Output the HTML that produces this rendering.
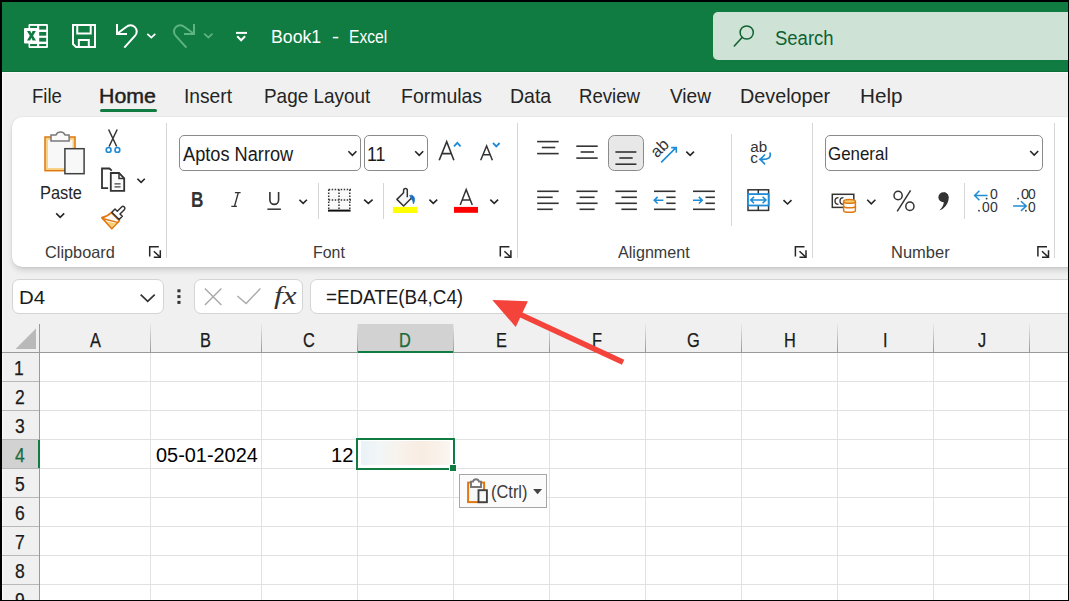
<!DOCTYPE html>
<html><head><meta charset="utf-8"><style>
html,body{margin:0;padding:0;}
body{width:1069px;height:601px;background:#000;position:relative;overflow:hidden;font-family:"Liberation Sans",sans-serif;}
.b{position:absolute;}
.t{position:absolute;white-space:nowrap;line-height:1;transform-origin:0 0;}
</style></head><body>
<div class="b" style="left:2px;top:2px;width:1066px;height:70px;background:#107c41"></div>
<div class="b" style="left:2px;top:72px;width:1066px;height:528px;background:#f0f0f0"></div>
<div class="b" style="left:2px;top:71px;width:1066px;height:1px;background:#0b6e37"></div>
<div class="b" style="left:2px;top:72px;width:1066px;height:1px;background:#fafafa"></div>
<div class="b" style="left:2px;top:72px;width:1px;height:528px;background:#fafafa"></div>
<div class="b" style="left:12px;top:117px;width:1070px;height:150px;background:#fff;border-radius:10px;box-shadow:0 0 1.5px rgba(0,0,0,0.14),0 4px 7px -2px rgba(0,0,0,0.2)"></div>
<div class="b" style="left:713px;top:12px;width:400px;height:48px;background:#cfe2d6;border-radius:5px"></div>
<div class="t" style="left:270.58px;top:28.17px;font-size:18.46px;color:#ffffff;font-weight:normal;transform:scaleX(0.9595);">Book1</div>
<div class="t" style="left:332.15px;top:28.17px;font-size:18.46px;color:#ffffff;font-weight:normal;transform:scaleX(1.1485);">-</div>
<div class="t" style="left:349.15px;top:28.17px;font-size:18.46px;color:#ffffff;font-weight:normal;transform:scaleX(0.8461);">Excel</div>
<div class="t" style="left:774.87px;top:27.57px;font-size:20.35px;color:#0e6232;font-weight:normal;transform:scaleX(0.9090);">Search</div>
<div class="t" style="left:32.01px;top:87.01px;font-size:19.48px;color:#242424;font-weight:normal;transform:scaleX(0.9545);">File</div>
<div class="t" style="left:98.99px;top:87.01px;font-size:19.48px;color:#1f1f1f;font-weight:normal;transform:scaleX(1.0955);-webkit-text-stroke:0.45px #1f1f1f;">Home</div>
<div class="b" style="left:100px;top:109px;width:57px;height:3px;border-radius:2px;background:#107c41"></div>
<div class="t" style="left:183.77px;top:87.01px;font-size:19.48px;color:#242424;font-weight:normal;transform:scaleX(0.9864);">Insert</div>
<div class="t" style="left:264.19px;top:87.01px;font-size:19.48px;color:#242424;font-weight:normal;transform:scaleX(0.9712);">Page Layout</div>
<div class="t" style="left:401.24px;top:87.01px;font-size:19.48px;color:#242424;font-weight:normal;transform:scaleX(0.9990);">Formulas</div>
<div class="t" style="left:509.94px;top:87.01px;font-size:19.48px;color:#242424;font-weight:normal;transform:scaleX(1.0016);">Data</div>
<div class="t" style="left:579.21px;top:87.01px;font-size:19.48px;color:#242424;font-weight:normal;transform:scaleX(0.9563);">Review</div>
<div class="t" style="left:670.40px;top:87.01px;font-size:19.48px;color:#242424;font-weight:normal;transform:scaleX(0.9791);">View</div>
<div class="t" style="left:740.22px;top:87.01px;font-size:19.48px;color:#242424;font-weight:normal;transform:scaleX(1.0165);">Developer</div>
<div class="t" style="left:859.65px;top:87.01px;font-size:19.48px;color:#242424;font-weight:normal;transform:scaleX(1.0614);">Help</div>
<div class="t" style="left:39.69px;top:184.79px;font-size:17.44px;color:#262626;font-weight:normal;transform:scaleX(0.9418);">Paste</div>
<div class="t" style="left:45.18px;top:243.72px;font-size:16.28px;color:#3a3a3a;font-weight:normal;transform:scaleX(1.0017);">Clipboard</div>
<div class="t" style="left:313.33px;top:243.72px;font-size:16.28px;color:#3a3a3a;font-weight:normal;transform:scaleX(0.9790);">Font</div>
<div class="t" style="left:617.50px;top:243.72px;font-size:16.28px;color:#3a3a3a;font-weight:normal;transform:scaleX(0.9909);">Alignment</div>
<div class="t" style="left:890.98px;top:243.72px;font-size:16.28px;color:#3a3a3a;font-weight:normal;transform:scaleX(1.0141);">Number</div>
<div class="b" style="left:166px;top:123px;width:1px;height:135px;background:#d6d6d6"></div>
<div class="b" style="left:517px;top:123px;width:1px;height:135px;background:#d6d6d6"></div>
<div class="b" style="left:812px;top:123px;width:1px;height:135px;background:#d6d6d6"></div>
<div class="b" style="left:1054px;top:123px;width:1px;height:135px;background:#d6d6d6"></div>
<div class="b" style="left:318px;top:183px;width:1px;height:36px;background:#d6d6d6"></div>
<div class="b" style="left:383px;top:183px;width:1px;height:36px;background:#d6d6d6"></div>
<div class="b" style="left:731px;top:134px;width:1px;height:92px;background:#d6d6d6"></div>
<div class="b" style="left:964px;top:183px;width:1px;height:36px;background:#d6d6d6"></div>
<div class="b" style="left:179px;top:135px;width:182px;height:36px;box-sizing:border-box;border:1px solid #8a8a8a;background:#fff;border-radius:5px"></div>
<div class="b" style="left:364px;top:135px;width:64px;height:36px;box-sizing:border-box;border:1px solid #8a8a8a;background:#fff;border-radius:5px"></div>
<div class="b" style="left:825px;top:135px;width:218px;height:36px;box-sizing:border-box;border:1px solid #8a8a8a;background:#fff;border-radius:5px"></div>
<div class="t" style="left:182.70px;top:144.84px;font-size:19.33px;color:#1a1a1a;font-weight:normal;transform:scaleX(0.9415);">Aptos Narrow</div>
<div class="t" style="left:367.06px;top:144.84px;font-size:19.33px;color:#1a1a1a;font-weight:normal;transform:scaleX(0.9215);">11</div>
<div class="t" style="left:827.65px;top:144.65px;font-size:18.60px;color:#1a1a1a;font-weight:normal;transform:scaleX(0.9096);">General</div>
<div class="b" style="left:12px;top:279px;width:152px;height:35px;box-sizing:border-box;border:1px solid #d4d4d4;background:#fff;border-radius:7px"></div>
<div class="b" style="left:194px;top:279px;width:109px;height:35px;box-sizing:border-box;border:1px solid #d4d4d4;background:#fff;border-radius:7px"></div>
<div class="b" style="left:310px;top:279px;width:790px;height:35px;box-sizing:border-box;border:1px solid #d4d4d4;background:#fff;border-radius:7px"></div>
<div class="t" style="left:18.77px;top:289.54px;font-size:17.44px;color:#1a1a1a;font-weight:normal;transform:scaleX(1.1712);">D4</div>
<div class="t" style="left:326.15px;top:288.44px;font-size:19.33px;color:#1a1a1a;font-weight:normal;transform:scaleX(0.9734);">=EDATE(B4,C4)</div>
<div class="b" style="left:40px;top:353px;width:1028px;height:247px;background:#fff"></div>
<div class="b" style="left:358px;top:324px;width:95px;height:28px;background:#d2d2d2"></div>
<div class="b" style="left:2px;top:440px;width:37px;height:28px;background:#d2d2d2"></div>
<div class="b" style="left:40px;top:381px;width:1028px;height:1px;background:#e1e1e1"></div>
<div class="b" style="left:40px;top:410px;width:1028px;height:1px;background:#e1e1e1"></div>
<div class="b" style="left:40px;top:439px;width:1028px;height:1px;background:#e1e1e1"></div>
<div class="b" style="left:40px;top:468px;width:1028px;height:1px;background:#e1e1e1"></div>
<div class="b" style="left:40px;top:497px;width:1028px;height:1px;background:#e1e1e1"></div>
<div class="b" style="left:40px;top:526px;width:1028px;height:1px;background:#e1e1e1"></div>
<div class="b" style="left:40px;top:555px;width:1028px;height:1px;background:#e1e1e1"></div>
<div class="b" style="left:40px;top:584px;width:1028px;height:1px;background:#e1e1e1"></div>
<div class="b" style="left:40px;top:613px;width:1028px;height:1px;background:#e1e1e1"></div>
<div class="b" style="left:150px;top:353px;width:1px;height:247px;background:#e1e1e1"></div>
<div class="b" style="left:261px;top:353px;width:1px;height:247px;background:#e1e1e1"></div>
<div class="b" style="left:357px;top:353px;width:1px;height:247px;background:#e1e1e1"></div>
<div class="b" style="left:453px;top:353px;width:1px;height:247px;background:#e1e1e1"></div>
<div class="b" style="left:549px;top:353px;width:1px;height:247px;background:#e1e1e1"></div>
<div class="b" style="left:645px;top:353px;width:1px;height:247px;background:#e1e1e1"></div>
<div class="b" style="left:741px;top:353px;width:1px;height:247px;background:#e1e1e1"></div>
<div class="b" style="left:837px;top:353px;width:1px;height:247px;background:#e1e1e1"></div>
<div class="b" style="left:933px;top:353px;width:1px;height:247px;background:#e1e1e1"></div>
<div class="b" style="left:1029px;top:353px;width:1px;height:247px;background:#e1e1e1"></div>
<div class="b" style="left:1125px;top:353px;width:1px;height:247px;background:#e1e1e1"></div>
<div class="b" style="left:150px;top:324px;width:1px;height:28px;background:linear-gradient(#e8e8e8,#9a9a9a)"></div>
<div class="b" style="left:261px;top:324px;width:1px;height:28px;background:linear-gradient(#e8e8e8,#9a9a9a)"></div>
<div class="b" style="left:357px;top:324px;width:1px;height:28px;background:linear-gradient(#e8e8e8,#9a9a9a)"></div>
<div class="b" style="left:453px;top:324px;width:1px;height:28px;background:linear-gradient(#e8e8e8,#9a9a9a)"></div>
<div class="b" style="left:549px;top:324px;width:1px;height:28px;background:linear-gradient(#e8e8e8,#9a9a9a)"></div>
<div class="b" style="left:645px;top:324px;width:1px;height:28px;background:linear-gradient(#e8e8e8,#9a9a9a)"></div>
<div class="b" style="left:741px;top:324px;width:1px;height:28px;background:linear-gradient(#e8e8e8,#9a9a9a)"></div>
<div class="b" style="left:837px;top:324px;width:1px;height:28px;background:linear-gradient(#e8e8e8,#9a9a9a)"></div>
<div class="b" style="left:933px;top:324px;width:1px;height:28px;background:linear-gradient(#e8e8e8,#9a9a9a)"></div>
<div class="b" style="left:1029px;top:324px;width:1px;height:28px;background:linear-gradient(#e8e8e8,#9a9a9a)"></div>
<div class="b" style="left:1125px;top:324px;width:1px;height:28px;background:linear-gradient(#e8e8e8,#9a9a9a)"></div>
<div class="b" style="left:2px;top:381px;width:37px;height:1px;background:#b8b8b8"></div>
<div class="b" style="left:2px;top:410px;width:37px;height:1px;background:#b8b8b8"></div>
<div class="b" style="left:2px;top:439px;width:37px;height:1px;background:#b8b8b8"></div>
<div class="b" style="left:2px;top:468px;width:37px;height:1px;background:#b8b8b8"></div>
<div class="b" style="left:2px;top:497px;width:37px;height:1px;background:#b8b8b8"></div>
<div class="b" style="left:2px;top:526px;width:37px;height:1px;background:#b8b8b8"></div>
<div class="b" style="left:2px;top:555px;width:37px;height:1px;background:#b8b8b8"></div>
<div class="b" style="left:2px;top:584px;width:37px;height:1px;background:#b8b8b8"></div>
<div class="b" style="left:2px;top:613px;width:37px;height:1px;background:#b8b8b8"></div>
<div class="b" style="left:39px;top:324px;width:1px;height:276px;background:#9a9a9a"></div>
<div class="b" style="left:2px;top:352px;width:1066px;height:1px;background:#9a9a9a"></div>
<div class="b" style="left:358px;top:351px;width:95px;height:2px;background:#107c41"></div>
<div class="b" style="left:38px;top:440px;width:2px;height:28px;background:#107c41"></div>
<svg class="b" style="left:0;top:0" width="1069" height="601"><polygon points="36,328.5 36,349 15.5,349" fill="#b9b9b9"/></svg>
<div class="t" style="left:89.56px;top:331.31px;font-size:19.48px;color:#1a1a1a;font-weight:normal;transform:scaleX(0.8400);-webkit-text-stroke:0.25px #1a1a1a;">A</div>
<div class="t" style="left:200.31px;top:331.31px;font-size:19.48px;color:#1a1a1a;font-weight:normal;transform:scaleX(0.8400);-webkit-text-stroke:0.25px #1a1a1a;">B</div>
<div class="t" style="left:303.49px;top:331.31px;font-size:19.48px;color:#1a1a1a;font-weight:normal;transform:scaleX(0.8400);-webkit-text-stroke:0.25px #1a1a1a;">C</div>
<div class="t" style="left:399.32px;top:331.31px;font-size:19.48px;color:#1b6a3c;font-weight:normal;transform:scaleX(0.8400);-webkit-text-stroke:0.25px #1b6a3c;">D</div>
<div class="t" style="left:495.73px;top:331.31px;font-size:19.48px;color:#1a1a1a;font-weight:normal;transform:scaleX(0.8400);-webkit-text-stroke:0.25px #1a1a1a;">E</div>
<div class="t" style="left:592.14px;top:331.31px;font-size:19.48px;color:#1a1a1a;font-weight:normal;transform:scaleX(0.8400);-webkit-text-stroke:0.25px #1a1a1a;">F</div>
<div class="t" style="left:687.32px;top:331.31px;font-size:19.48px;color:#1a1a1a;font-weight:normal;transform:scaleX(0.8400);-webkit-text-stroke:0.25px #1a1a1a;">G</div>
<div class="t" style="left:783.57px;top:331.31px;font-size:19.48px;color:#1a1a1a;font-weight:normal;transform:scaleX(0.8400);-webkit-text-stroke:0.25px #1a1a1a;">H</div>
<div class="t" style="left:883.21px;top:331.31px;font-size:19.48px;color:#1a1a1a;font-weight:normal;transform:scaleX(0.8400);-webkit-text-stroke:0.25px #1a1a1a;">I</div>
<div class="t" style="left:977.86px;top:331.31px;font-size:19.48px;color:#1a1a1a;font-weight:normal;transform:scaleX(0.8400);-webkit-text-stroke:0.25px #1a1a1a;">J</div>
<div class="t" style="left:14.47px;top:359.31px;font-size:19.48px;color:#1a1a1a;font-weight:normal;transform:scaleX(0.9000);-webkit-text-stroke:0.25px #1a1a1a;">1</div>
<div class="t" style="left:14.69px;top:388.31px;font-size:19.48px;color:#1a1a1a;font-weight:normal;transform:scaleX(0.9000);-webkit-text-stroke:0.25px #1a1a1a;">2</div>
<div class="t" style="left:14.78px;top:417.31px;font-size:19.48px;color:#1a1a1a;font-weight:normal;transform:scaleX(0.9000);-webkit-text-stroke:0.25px #1a1a1a;">3</div>
<div class="t" style="left:14.78px;top:446.31px;font-size:19.48px;color:#1b6a3c;font-weight:normal;transform:scaleX(0.9000);-webkit-text-stroke:0.25px #1b6a3c;">4</div>
<div class="t" style="left:14.74px;top:475.31px;font-size:19.48px;color:#1a1a1a;font-weight:normal;transform:scaleX(0.9000);-webkit-text-stroke:0.25px #1a1a1a;">5</div>
<div class="t" style="left:14.65px;top:504.31px;font-size:19.48px;color:#1a1a1a;font-weight:normal;transform:scaleX(0.9000);-webkit-text-stroke:0.25px #1a1a1a;">6</div>
<div class="t" style="left:14.69px;top:533.31px;font-size:19.48px;color:#1a1a1a;font-weight:normal;transform:scaleX(0.9000);-webkit-text-stroke:0.25px #1a1a1a;">7</div>
<div class="t" style="left:14.74px;top:562.31px;font-size:19.48px;color:#1a1a1a;font-weight:normal;transform:scaleX(0.9000);-webkit-text-stroke:0.25px #1a1a1a;">8</div>
<div class="t" style="left:14.74px;top:591.31px;font-size:19.48px;color:#1a1a1a;font-weight:normal;transform:scaleX(0.9000);-webkit-text-stroke:0.25px #1a1a1a;">9</div>
<div class="t" style="left:155.80px;top:445.47px;font-size:20.35px;color:#000;font-weight:normal;transform:scaleX(0.9780);">05-01-2024</div>
<div class="t" style="left:331.48px;top:445.47px;font-size:20.35px;color:#000;font-weight:normal;transform:scaleX(0.9928);">12</div>
<div class="b" style="left:356px;top:438px;width:99px;height:32px;box-sizing:border-box;border:2px solid #107c41"></div>
<div class="b" style="left:361px;top:441px;width:89px;height:24px;background:linear-gradient(90deg,#eaf2f8 0%,#f2f6f6 22%,#f7f3ed 40%,#f8eee5 58%,#f8ede2 70%,#f9f1e8 85%,#faf6f1 100%)"></div>
<div class="b" style="left:449px;top:464px;width:8px;height:8px;background:#fff"></div>
<div class="b" style="left:450px;top:465px;width:6px;height:6px;background:#107c41"></div>
<div class="b" style="left:459px;top:474px;width:88px;height:34px;box-sizing:border-box;border:1px solid #a6a6a6;background:#fbfbfb;border-radius:0px"></div>
<div class="t" style="left:491.21px;top:482.48px;font-size:19.04px;color:#3c3c3c;font-weight:normal;transform:scaleX(0.8633);">(Ctrl)</div>
<div class="t" style="left:191.08px;top:189.34px;font-size:21.80px;color:#333;font-weight:bold;transform:scaleX(0.7905);">B</div>
<div class="t" style="left:989.51px;top:187.43px;font-size:14.97px;color:#333;font-weight:normal;transform:scaleX(0.9365);">0</div>
<div class="t" style="left:982.12px;top:199.53px;font-size:14.97px;color:#333;font-weight:normal;transform:scaleX(0.9228);">0</div>
<div class="t" style="left:989.51px;top:199.53px;font-size:14.97px;color:#333;font-weight:normal;transform:scaleX(0.9365);">0</div>
<div class="t" style="left:1020.79px;top:187.43px;font-size:14.97px;color:#333;font-weight:normal;transform:scaleX(0.9778);">0</div>
<div class="t" style="left:1028.32px;top:187.43px;font-size:14.97px;color:#333;font-weight:normal;transform:scaleX(0.9228);">0</div>
<div class="t" style="left:1028.32px;top:199.53px;font-size:14.97px;color:#333;font-weight:normal;transform:scaleX(0.9228);">0</div>
<svg class="b" style="left:0;top:0" width="1069" height="601"><rect x="28.5" y="24" width="19.5" height="24" rx="1.2" fill="#fff"/><rect x="30.1" y="25.9" width="6.9" height="2.1000000000000014" fill="#107c41"/><rect x="30.1" y="31.4" width="6.9" height="4.300000000000004" fill="#107c41"/><rect x="30.1" y="37.6" width="6.9" height="4.0" fill="#107c41"/><rect x="30.1" y="44" width="6.9" height="2.1000000000000014" fill="#107c41"/><rect x="39.2" y="25.9" width="7" height="3.700000000000003" fill="#107c41"/><rect x="39.2" y="32" width="7" height="3.700000000000003" fill="#107c41"/><rect x="39.2" y="37.8" width="7" height="3.8000000000000043" fill="#107c41"/><rect x="39.2" y="44" width="7" height="2.1000000000000014" fill="#107c41"/><rect x="24" y="28" width="14.2" height="15.4" rx="1" fill="#fff"/><polygon points="27,31 30.3,31 31.4,33.6 32.6,31 35.8,31 33.1,35.7 36,40.5 32.6,40.5 31.4,37.8 30.2,40.5 27,40.5 29.8,35.7" fill="#107c41"/><path d="M73,25 H95 V47 H76 L73,44 Z" fill="none" stroke="#fff" stroke-width="2"/><path d="M77.25,25 V33.4 H90.7 V25" fill="none" stroke="#fff" stroke-width="2"/><path d="M78.85,47 V39.9 H88.8 V47" fill="none" stroke="#fff" stroke-width="2"/><path d="M117,24 V34 H127" fill="none" stroke="#fff" stroke-width="2"/><path d="M117.5,33.5 L126.1,27.1 A6.2,6.2 0 1 1 134.9,35.9 L124.3,47.6" fill="none" stroke="#fff" stroke-width="2"/><path d="M147.3,33.8 L151.3,37.6 L155.3,33.8" fill="none" stroke="#fff" stroke-width="1.7" stroke-linecap="butt" stroke-linejoin="miter"/><path d="M194,24 V34 H184" fill="none" stroke="#5db381" stroke-width="2"/><path d="M193.5,33.5 L184.6,27.1 A6.2,6.2 0 1 0 175.8,35.9 L186.4,47.6" fill="none" stroke="#5db381" stroke-width="2"/><path d="M204.2,33.7 L208.35,37.5 L212.5,33.7" fill="none" stroke="#5db381" stroke-width="1.7" stroke-linecap="butt" stroke-linejoin="miter"/><path d="M236,32.9 H247" stroke="#fff" stroke-width="2"/><path d="M237.2,36.3 L241.14999999999998,40.3 L245.1,36.3" fill="none" stroke="#fff" stroke-width="2" stroke-linecap="butt" stroke-linejoin="miter"/><circle cx="746.7" cy="32.5" r="6.6" fill="none" stroke="#0e6232" stroke-width="1.5"/><path d="M742.3,37.3 L734.3,46" stroke="#0e6232" stroke-width="1.6" stroke-linecap="round"/><rect x="45" y="137" width="30" height="33.7" fill="#f7d289" stroke="#e0780f" stroke-width="1.5"/><rect x="48" y="140" width="24.5" height="28" fill="#f8f8f8"/><path d="M51,134.9 H56 A5,5 0 0 1 65,134.9 H69.1 V141 H51 Z" fill="#fafafa" stroke="#7a7a7a" stroke-width="1.5"/><rect x="64.9" y="148.7" width="19.2" height="25" fill="#f8f8f8" stroke="#404040" stroke-width="1.5"/><path d="M56.2,213.4 L60.2,217.4 L64.2,213.4" fill="none" stroke="#262626" stroke-width="1.6" stroke-linecap="butt" stroke-linejoin="miter"/><path d="M108.6,129.5 L116.7,146.5 M117.2,129.5 L109.1,146.5" stroke="#333" stroke-width="1.5" fill="none"/><circle cx="108.6" cy="149.9" r="2.4" fill="none" stroke="#1e8bd6" stroke-width="1.6"/><circle cx="117.4" cy="149.9" r="2.4" fill="none" stroke="#1e8bd6" stroke-width="1.6"/><path d="M108.1,188.2 H102 V168.5 H109.4 L111.8,170.6" fill="none" stroke="#333" stroke-width="1.8"/><path d="M110.8,173 H119 L124.2,178.4 V190.9 H110.8 Z" fill="#fafafa" stroke="#333" stroke-width="1.8"/><path d="M119,173 V178.4 H124.2" fill="none" stroke="#333" stroke-width="1.5"/><path d="M114.5,183.8 H120.6 M114.5,186.9 H120.6" stroke="#444" stroke-width="1.3"/><path d="M137.4,178.7 L141.10000000000002,182.4 L144.8,178.7" fill="none" stroke="#262626" stroke-width="1.6" stroke-linecap="butt" stroke-linejoin="miter"/><path d="M101.8,217.6 Q107.5,216.5 111.3,212.6 L119.4,220.8 L111.8,228.6 Z" fill="#fafafa" stroke="#e0780f" stroke-width="1.6" stroke-linejoin="round"/><path d="M106.5,221.6 L116.2,223.5 L111.8,227.5 Z" fill="#f5cf72"/><path d="M102.5,218.5 L118.5,222.6" stroke="#e0780f" stroke-width="1.4"/><path d="M111.8,212.2 L115,209 L117.3,211.3 L121.6,207 A1.9,1.9 0 0 1 124.3,209.7 L120,214 L122.3,216.3 L119.1,219.5 Z" fill="#fff" stroke="#333" stroke-width="1.5" stroke-linejoin="round"/><path d="M149.7,256.5 V246.8 H158.79999999999998" fill="none" stroke="#262626" stroke-width="1.5"/><path d="M153.79999999999998,251.20000000000002 L160.1,257.1" stroke="#262626" stroke-width="1.5" fill="none"/><path d="M160.29999999999998,250.3 V257.2 H153.79999999999998" fill="none" stroke="#262626" stroke-width="1.5"/><path d="M500.3,256.5 V246.8 H509.40000000000003" fill="none" stroke="#262626" stroke-width="1.5"/><path d="M504.40000000000003,251.20000000000002 L510.7,257.1" stroke="#262626" stroke-width="1.5" fill="none"/><path d="M510.90000000000003,250.3 V257.2 H504.40000000000003" fill="none" stroke="#262626" stroke-width="1.5"/><path d="M795.4,256.5 V246.8 H804.5" fill="none" stroke="#262626" stroke-width="1.5"/><path d="M799.5,251.20000000000002 L805.8,257.1" stroke="#262626" stroke-width="1.5" fill="none"/><path d="M806.0,250.3 V257.2 H799.5" fill="none" stroke="#262626" stroke-width="1.5"/><path d="M1037.9,256.5 V246.8 H1047.0" fill="none" stroke="#262626" stroke-width="1.5"/><path d="M1042.0,251.20000000000002 L1048.3000000000002,257.1" stroke="#262626" stroke-width="1.5" fill="none"/><path d="M1048.5,250.3 V257.2 H1042.0" fill="none" stroke="#262626" stroke-width="1.5"/><path d="M348.4,151.3 L352.4,155.4 L356.4,151.3" fill="none" stroke="#262626" stroke-width="1.6" stroke-linecap="butt" stroke-linejoin="miter"/><path d="M415.2,151.3 L419.2,155.4 L423.2,151.3" fill="none" stroke="#262626" stroke-width="1.6" stroke-linecap="butt" stroke-linejoin="miter"/><path d="M439.2,160.2 L446.7,141.6 L453.9,160.2 M442.2,153.6 H451.2" fill="none" stroke="#333" stroke-width="1.6"/><path d="M454,146.4 L457.3,142.8 L460.6,146.4" fill="none" stroke="#1e8bd6" stroke-width="1.8" stroke-linecap="butt" stroke-linejoin="miter"/><path d="M480.7,160.2 L486.6,146 L492.4,160.2 M482.9,154.7 H490.3" fill="none" stroke="#333" stroke-width="1.5"/><path d="M493,143 L496.3,146.4 L499.6,143" fill="none" stroke="#1e8bd6" stroke-width="1.8" stroke-linecap="butt" stroke-linejoin="miter"/><path d="M234.9,192.6 H240.6 M231.3,206.4 H236.9 M238.3,192.6 L234.5,206.4" fill="none" stroke="#333" stroke-width="1.4"/><path d="M269.9,192.1 V200 A4.35,4.35 0 0 0 278.6,200 V192.1" fill="none" stroke="#333" stroke-width="1.6"/><path d="M267.4,209.2 H280.9" stroke="#333" stroke-width="1.5"/><path d="M299.4,199.7 L303.15,203.4 L306.9,199.7" fill="none" stroke="#262626" stroke-width="1.6" stroke-linecap="butt" stroke-linejoin="miter"/><rect x="329" y="190" width="21" height="20" fill="#f9f9f9"/><path d="M328.7,189.6 H351 M328.7,189.6 V209 M349.8,189.6 V209 M339,189.6 V209 M328.7,200 H351" fill="none" stroke="#333" stroke-width="1.5" stroke-dasharray="1.5 1.5"/><path d="M328,210.6 H350.6" stroke="#111" stroke-width="2"/><path d="M364.1,199.7 L368.35,203.4 L372.6,199.7" fill="none" stroke="#262626" stroke-width="1.6" stroke-linecap="butt" stroke-linejoin="miter"/><path d="M396.9,199.4 L403.6,192.7 L411.3,197.8 L403.6,205.6 Z" fill="#f7f7f7"/><path d="M403.6,192.7 L396.9,199.4 L403.6,206 L411.3,198.3" fill="none" stroke="#333" stroke-width="1.5" stroke-linejoin="round"/><path d="M403.6,193 V190.3 A1.85,1.85 0 0 1 407.3,190.3 V197.3" fill="none" stroke="#333" stroke-width="1.5"/><path d="M409.6,195.4 Q413.5,194.2 414.6,198.5 Q415,201.5 413.4,204 Q413,200.5 411.3,198.8 Z" fill="#1a6fc2" stroke="#1a6fc2" stroke-width="0.6"/><rect x="392.9" y="206.9" width="24.1" height="6.1" fill="#ffff00"/><path d="M429.4,199.7 L433.29999999999995,203.4 L437.2,199.7" fill="none" stroke="#262626" stroke-width="1.6" stroke-linecap="butt" stroke-linejoin="miter"/><path d="M460.2,205 L466.2,189.6 L472.3,205 M462.4,200 H470.1" fill="none" stroke="#333" stroke-width="1.5"/><rect x="454" y="206.9" width="24" height="5.9" fill="#ff0000"/><path d="M490.3,199.7 L494.20000000000005,203.4 L498.1,199.7" fill="none" stroke="#262626" stroke-width="1.6" stroke-linecap="butt" stroke-linejoin="miter"/><path d="M537.1,141.6 H558.7" stroke="#333" stroke-width="1.6"/><path d="M541.8,147.5 H555.3" stroke="#333" stroke-width="1.6"/><path d="M537.1,153.6 H558.7" stroke="#333" stroke-width="1.6"/><path d="M576.3,146.2 H597.7" stroke="#333" stroke-width="1.6"/><path d="M580.6,152 H594" stroke="#333" stroke-width="1.6"/><path d="M576.3,158.1 H597.7" stroke="#333" stroke-width="1.6"/><rect x="608.5" y="135.5" width="35" height="35" rx="6" fill="#e8e8e8" stroke="#8a8a8a" stroke-width="1"/><path d="M615.4,152 H636.4" stroke="#333" stroke-width="1.6"/><path d="M619.3,158 H632.7" stroke="#333" stroke-width="1.6"/><path d="M615.4,164.2 H636.4" stroke="#333" stroke-width="1.6"/><path d="M537.2,191.3 H558.7" stroke="#333" stroke-width="1.6"/><path d="M537.2,197.3 H552.7" stroke="#333" stroke-width="1.6"/><path d="M537.2,203.3 H558.7" stroke="#333" stroke-width="1.6"/><path d="M537.2,209.3 H552.7" stroke="#333" stroke-width="1.6"/><path d="M576.4,191.3 H597.6" stroke="#333" stroke-width="1.6"/><path d="M579.6,197.3 H594.6" stroke="#333" stroke-width="1.6"/><path d="M576.4,203.3 H597.6" stroke="#333" stroke-width="1.6"/><path d="M579.6,209.3 H594.6" stroke="#333" stroke-width="1.6"/><path d="M615.4,191.3 H636.9" stroke="#333" stroke-width="1.6"/><path d="M621.4,197.3 H636.9" stroke="#333" stroke-width="1.6"/><path d="M615.4,203.3 H636.9" stroke="#333" stroke-width="1.6"/><path d="M621.4,209.3 H636.9" stroke="#333" stroke-width="1.6"/><path d="M654,191.3 H675.6" stroke="#333" stroke-width="1.6"/><path d="M666.3,197.3 H675.6" stroke="#333" stroke-width="1.6"/><path d="M666.3,203.3 H675.6" stroke="#333" stroke-width="1.6"/><path d="M654,209.3 H675.6" stroke="#333" stroke-width="1.6"/><path d="M654.3,200.2 H663.4 M657.6,196.9 L654.3,200.2 L657.6,203.5" fill="none" stroke="#1e8bd6" stroke-width="1.6"/><path d="M693,191.3 H714.9" stroke="#333" stroke-width="1.6"/><path d="M705.5,197.3 H714.9" stroke="#333" stroke-width="1.6"/><path d="M705.5,203.3 H714.9" stroke="#333" stroke-width="1.6"/><path d="M693,209.3 H714.9" stroke="#333" stroke-width="1.6"/><path d="M693,200.2 H702.2 M698.9,196.9 L702.2,200.2 L698.9,203.5" fill="none" stroke="#1e8bd6" stroke-width="1.6"/><text x="0" y="0" transform="translate(657,158.5) rotate(-45)" font-family="Liberation Sans" font-size="16.5" fill="#333">ab</text><path d="M661.2,162.4 L676,147.6 M671.2,147.6 H676.3 V152.8" fill="none" stroke="#1e8bd6" stroke-width="1.6"/><path d="M686.3,151.6 L690.15,155.4 L694,151.6" fill="none" stroke="#262626" stroke-width="1.6" stroke-linecap="butt" stroke-linejoin="miter"/><text x="750.2" y="152.4" font-family="Liberation Sans" font-size="15.2" fill="#333">ab</text><text x="750.2" y="163.3" font-family="Liberation Sans" font-size="15.5" fill="#333">c</text><path d="M770.1,153.2 Q771.5,159.3 763,159.3 H759.6 M764.6,155 L760.2,159.3 L764.6,163.8" fill="none" stroke="#1e8bd6" stroke-width="1.7" stroke-linecap="round" stroke-linejoin="round"/><rect x="748" y="189.8" width="20.6" height="20.6" fill="#fff" stroke="#333" stroke-width="1.5"/><path d="M758.3,189.8 V194 M758.3,205.5 V210.4" stroke="#333" stroke-width="1.5"/><rect x="748" y="194.1" width="20.6" height="11.4" fill="#fff" stroke="#1e8bd6" stroke-width="1.8"/><path d="M750.8,200 H766 M754,196.8 L750.8,200 L754,203.2 M762.6,196.8 L765.9,200 L762.6,203.2" fill="none" stroke="#1e8bd6" stroke-width="1.6"/><path d="M783.5,200.2 L787.5,204 L791.5,200.2" fill="none" stroke="#262626" stroke-width="1.6" stroke-linecap="butt" stroke-linejoin="miter"/><path d="M1030.2,151 L1034.2,155 L1038.2,151" fill="none" stroke="#262626" stroke-width="1.6" stroke-linecap="butt" stroke-linejoin="miter"/><rect x="832.3" y="194.3" width="21.5" height="13.1" fill="#fff" stroke="#333" stroke-width="1.5"/><path d="M838.5,197.6 Q835,197.6 835,201 Q835,204.4 838.5,204.4 M843.5,197.6 Q840,197.6 840,201 Q840,204.4 843.5,204.4" fill="none" stroke="#333" stroke-width="1.4"/><path d="M843.6,201.4 V210.4 A5.9,1.9 0 0 0 855.4,210.4 V201.4" fill="#fff" stroke="#e0780f" stroke-width="1.5"/><ellipse cx="849.5" cy="201.4" rx="5.9" ry="1.9" fill="#f4cf73" stroke="#e0780f" stroke-width="1.5"/><path d="M843.6,205.9 A5.9,1.9 0 0 0 855.4,205.9" fill="none" stroke="#e0780f" stroke-width="1.5"/><path d="M867.2,199.8 L871.3,203.8 L875.4,199.8" fill="none" stroke="#262626" stroke-width="1.6" stroke-linecap="butt" stroke-linejoin="miter"/><ellipse cx="898.1" cy="195.5" rx="4.1" ry="4.3" fill="none" stroke="#333" stroke-width="1.5"/><ellipse cx="909.9" cy="206.3" rx="4.1" ry="4.3" fill="none" stroke="#333" stroke-width="1.5"/><path d="M910.6,190.4 L897.2,211.3" stroke="#333" stroke-width="1.5"/><circle cx="943.4" cy="197.3" r="5" fill="#333"/><path d="M944,192.3 Q949.5,193 948.5,200 Q947,207.5 939.4,210.6 Q944,205.5 943.8,202 Z" fill="#333"/><rect x="985.8000000000001" y="197.79999999999998" width="1.6" height="1.6" fill="#333"/><rect x="978.2" y="209.89999999999998" width="1.6" height="1.6" fill="#333"/><rect x="1017.3000000000001" y="197.79999999999998" width="1.6" height="1.6" fill="#333"/><rect x="1025.1000000000001" y="209.89999999999998" width="1.6" height="1.6" fill="#333"/><path d="M974.6,195.4 H987.5 M979.4,190.8 L974.6,195.4 L979.4,200.3" fill="none" stroke="#1e8bd6" stroke-width="1.5"/><path d="M1013.1,206 H1026.2 M1021,201.2 L1026.2,206 L1021,210.9" fill="none" stroke="#1e8bd6" stroke-width="1.5"/><path d="M140.7,294.6 L147.7,301.4 L154.7,294.6" fill="none" stroke="#333" stroke-width="1.7" stroke-linecap="butt" stroke-linejoin="miter"/><rect x="177.4" y="289.3" width="3.1" height="3" fill="#333"/><rect x="177.4" y="295.1" width="3.1" height="3" fill="#333"/><rect x="177.4" y="300.9" width="3.1" height="3" fill="#333"/><path d="M204.9,288.5 L221.4,305 M221.4,288.5 L204.9,305" stroke="#a9a9a9" stroke-width="1.4"/><path d="M237.4,296 L246.1,303.5 L260.4,288.4" fill="none" stroke="#a9a9a9" stroke-width="1.4"/><text x="274" y="303.6" font-family="Liberation Serif" font-style="italic" font-size="24.5" fill="#333" textLength="22.5" lengthAdjust="spacingAndGlyphs">fx</text><rect x="468.1" y="482.6" width="16" height="19.5" fill="#f8f8f8" stroke="#e0780f" stroke-width="2"/><path d="M471,481.6 H473 A3.1,3.1 0 0 1 479,481.6 H481 V487 H471 Z" fill="#fff" stroke="#777" stroke-width="1.9"/><rect x="478.5" y="490.2" width="8.4" height="12" fill="#f8f8f8" stroke="#404040" stroke-width="1.9"/><path d="M533.1,489 H542.1 L537.6,494.3 Z" fill="#444"/><path d="M492.3,300 L527.9,301.2 L515.7,327 Z" fill="#f4433a"/><path d="M517,313 L623.1,362.2" stroke="#f4433a" stroke-width="5.6"/></svg>
<div class="b" style="left:0;top:0;width:1069px;height:2px;background:#000"></div>
<div class="b" style="left:0;top:0;width:2px;height:601px;background:#000"></div>
<div class="b" style="left:1068px;top:0;width:1px;height:601px;background:#000"></div>
<div class="b" style="left:0;top:600px;width:1069px;height:1px;background:#000"></div>
</body></html>
